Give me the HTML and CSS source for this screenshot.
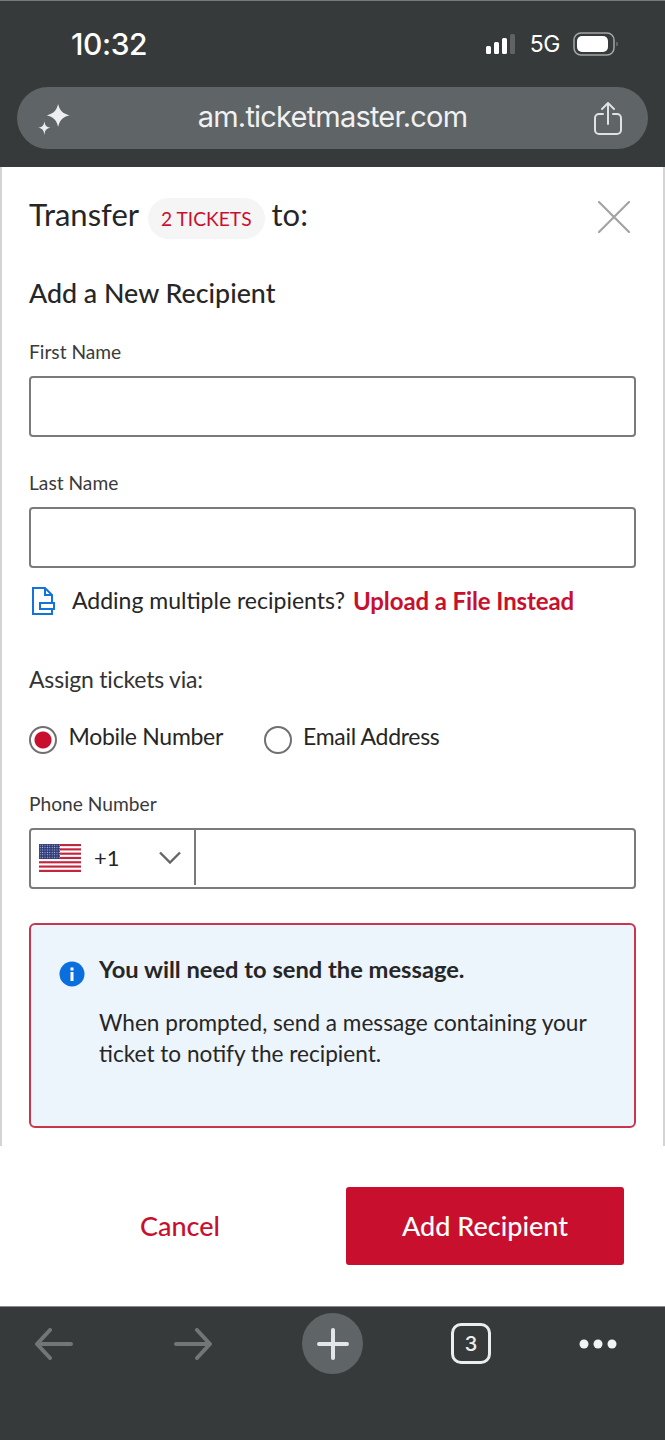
FILE: index.html
```html
<!DOCTYPE html>
<html lang="en">
<head>
<meta charset="utf-8">
<title>Transfer tickets</title>
<link rel="stylesheet" href="styles.css">
</head>
<body>
<header class="chrome-top">
  <div class="status">
    <span class="time">10:32</span>
    <div class="status-right">
      <svg class="signal" width="34" height="22" viewBox="0 0 34 22"><rect x="0" y="13" width="5" height="8" rx="1.5" fill="#fff"/><rect x="8" y="9" width="5" height="12" rx="1.5" fill="#fff"/><rect x="16" y="5" width="5" height="16" rx="1.5" fill="#fff"/><rect x="24" y="1" width="5" height="20" rx="1.5" fill="#5f6364"/></svg>
      <span class="net">5G</span>
      <svg class="battery" width="46" height="24" viewBox="0 0 46 24"><rect x="1" y="1" width="40" height="22" rx="7" fill="none" stroke="#a4a6a7" stroke-width="1.5"/><rect x="4" y="4" width="31" height="16" rx="5" fill="#fff"/><path d="M43.500 9.500c1.500.8 1.500 4.200 0 5z" fill="#8b8d8e"/></svg>
    </div>
  </div>
  <div class="urlbar">
    <svg class="sparkle" width="38" height="38" viewBox="0 0 36 36"><path d="M20 1c1.500 9 3.500 12.500 14 14.500C23.500 17.500 21.500 21 20 30c-1.500-9-3.500-12.500-14-14.500C16.500 13.500 18.500 10 20 1z" fill="#eceef0" stroke="#5f6466" stroke-width="1.500"/><path d="M7 21c.7 4 1.500 5.500 6 6.300-4.500.8-5.300 2.300-6 6.700-.7-4.400-1.500-5.900-6-6.700 4.500-.8 5.300-2.300 6-6.300z" fill="#eceef0"/></svg>
    <span class="url">am.ticketmaster.com</span>
    <svg class="share" width="30" height="36" viewBox="0 0 30 36" fill="none" stroke="#dfe1e2" stroke-width="2" stroke-linecap="round" stroke-linejoin="round"><path d="M10 13H6a4 4 0 0 0-4 4v12a4 4 0 0 0 4 4h18a4 4 0 0 0 4-4V17a4 4 0 0 0-4-4h-4"/><path d="M15 23V2M9 8l6-6 6 6"/></svg>
  </div>
</header>

<main class="sheet">
  <div class="title-row">
    <h1 class="title">Transfer <span class="pill">2 TICKETS</span> to:</h1>
    <svg class="close" width="32" height="32" viewBox="0 0 32 32" stroke="#a3a3a3" stroke-width="2.200" stroke-linecap="round"><path d="M1 1l30 30M31 1L1 31"/></svg>
  </div>
  <h2 class="subtitle">Add a New Recipient</h2>

  <form class="form">
    <div class="field first">
      <label class="label">First Name</label>
      <div class="input"></div>
    </div>
    <div class="field">
      <label class="label">Last Name</label>
      <div class="input"></div>
    </div>

    <p class="upload">
      <svg class="file-icon" width="25" height="30" viewBox="0 0 25 30" fill="none" stroke="#1473d8" stroke-width="2"><path d="M21 17V9l-7-7H2v26h19v-5"/><path d="M14 2v7h7"/><rect x="9" y="17" width="14" height="6"/></svg>
      <span>Adding multiple recipients?</span>
      <a class="link">Upload a File Instead</a>
    </p>

    <p class="assign">Assign tickets via:</p>
    <div class="radios">
      <div class="radio"><span class="dot on"></span><span>Mobile Number</span></div>
      <div class="radio"><span class="dot"></span><span>Email Address</span></div>
    </div>

    <div class="field phone-field">
      <label class="label">Phone Number</label>
      <div class="input phone">
        <div class="country">
          <svg class="flag" width="42" height="28" viewBox="0 0 42 28"><defs><pattern id="stars" width="2.400" height="2.400" patternUnits="userSpaceOnUse"><rect width="2.400" height="2.400" fill="#2c3a78"/><circle cx="1.200" cy="1.200" r=".6" fill="#c6cbe0"/></pattern></defs><rect width="42" height="28" fill="#fff"/><g fill="#c0273f"><rect width="42" height="2.150"/><rect y="4.300" width="42" height="2.150"/><rect y="8.600" width="42" height="2.150"/><rect y="12.900" width="42" height="2.150"/><rect y="17.200" width="42" height="2.150"/><rect y="21.500" width="42" height="2.150"/><rect y="25.800" width="42" height="2.200"/></g><rect width="21" height="15" fill="url(#stars)"/></svg>
          <span class="code">+1</span>
          <svg class="chev" width="22" height="13" viewBox="0 0 22 13" fill="none" stroke="#666" stroke-width="2.400"><path d="M1 1.500l10 10 10-10"/></svg>
        </div>
      </div>
    </div>

    <section class="notice">
      <svg class="info" width="26" height="26" viewBox="0 0 26 26"><circle cx="13" cy="13" r="12.500" fill="#0a6fdc"/><rect x="11.500" y="11" width="3" height="9" fill="#fff"/><rect x="11.500" y="6.500" width="3" height="3" fill="#fff"/></svg>
      <div class="notice-body">
        <p class="notice-title">You will need to send the message.</p>
        <p class="notice-text">When prompted, send a message containing your ticket to notify the recipient.</p>
      </div>
    </section>
  </form>
</main>

<div class="actions">
  <a class="cancel">Cancel</a>
  <a class="primary">Add Recipient</a>
</div>

<nav class="chrome-bottom">
  <svg class="nav-arrow" width="40" height="32" viewBox="0 0 40 32" fill="none" stroke="#737677" stroke-width="4" stroke-linecap="round" stroke-linejoin="round"><path d="M37 16H3M16 2L3 16l13 14"/></svg>
  <svg class="nav-arrow fwd" width="40" height="32" viewBox="0 0 40 32" fill="none" stroke="#737677" stroke-width="4" stroke-linecap="round" stroke-linejoin="round"><path d="M3 16h34M24 2l13 14-13 14"/></svg>
  <div class="plus"><svg width="32" height="32" viewBox="0 0 32 32" stroke="#e4e5e6" stroke-width="4" stroke-linecap="round"><path d="M16 2v28M2 16h28"/></svg></div>
  <div class="tabs">3</div>
  <svg class="more" width="38" height="10" viewBox="0 0 38 10" fill="#f2f3f3"><circle cx="5" cy="5" r="4.500"/><circle cx="19" cy="5" r="4.500"/><circle cx="33" cy="5" r="4.500"/></svg>
</nav>
</body>
</html>
```

FILE: styles.css
```css
* { box-sizing: border-box; }
html, body { margin: 0; padding: 0; }
body {
  width: 665px;
  height: 1440px;
  overflow: hidden;
  display: flex;
  flex-direction: column;
  background: #fff;
  color: #262626;
  font-family: "Lato", "Noto Sans", sans-serif;
}
h1, h2, p { margin: 0; font-weight: 400; }

.chrome-top {
  height: 167px;
  background: #363a3b;
  border-top: 1px solid #77797a;
  color: #fff;
  padding: 0 17px;
}
.status {
  height: 86px;
  display: flex;
  justify-content: space-between;
  align-items: center;
  padding: 0 29px 0 54px;
}
.time { font: 500 30px "Inter", sans-serif; letter-spacing: -.4px; margin-top: -1px; }
.status-right { display: flex; align-items: center; margin-top: -1px; }
.signal { margin-right: 10px; }
.net { font: 400 23px "Inter", sans-serif; margin-right: 13px; letter-spacing: -.5px; }
.urlbar {
  height: 62px;
  border-radius: 31px;
  background: #5f6466;
  display: flex;
  align-items: center;
  justify-content: space-between;
  padding: 0 25px 0 20px;
}
.url { font: 400 29px "Inter", "Roboto", sans-serif; letter-spacing: -.8px; color: #f0f1f2; margin: -4px 3px 0 0; }
.sparkle { flex: none; margin-top: -1px; }
.share { flex: none; margin-top: 1px; }

.sheet {
  height: 979px;
  border-left: 2px solid #d4d4d4;
  border-right: 2px solid #d4d4d4;
  padding: 0 27px;
  overflow: hidden;
}
.title-row {
  height: 100px;
  display: flex;
  align-items: flex-start;
  justify-content: space-between;
  padding-right: 6px;
}
.title { font-size: 31px; line-height: 40px; display: flex; align-items: flex-start; margin-top: 27px; }
.pill {
  height: 41px;
  padding: 0 13px;
  margin: 4px 7px 0 9px;
  border-radius: 21px;
  background: #f5f5f5;
  color: #c8102e;
  font-size: 19.2px;
  line-height: 41px;
}
.close { flex: none; margin-top: 34px; }
.subtitle { font-size: 26.800px; line-height: 34px; margin-top: 9px; font-weight: 500; }

.field { margin-top: 32px; }
.field.first { margin-top: 28px; }
.label { display: block; font-size: 19.200px; line-height: 28px; color: #3a3a3a; margin-bottom: 10px; }
.input {
  height: 61px;
  border: 2px solid #7b7b7b;
  border-radius: 4px;
  background: #fff;
}
.upload {
  display: flex;
  align-items: center;
  margin-top: 16px;
  height: 32px;
  font-size: 23px;
}
.file-icon { flex: none; margin: 2px 16px 0 2px; }
.link { color: #c8102e; font-weight: 700; font-size: 24px; letter-spacing: -.1px; margin-left: 8px; }
.assign { font-size: 23px; letter-spacing: -.2px; line-height: 32px; margin-top: 47px; color: #333; }
.radios { display: flex; gap: 40.500px; margin-top: 22px; font-size: 23px; letter-spacing: -.3px; line-height: 32px; }
.radio { display: flex; align-items: center; gap: 11.500px; }
.dot {
  width: 28px;
  height: 28px;
  border-radius: 50%;
  border: 2px solid #707070;
  background: #fff;
  margin-top: 9px;
}
.dot.on { background: radial-gradient(circle, #c8102e 0 8px, #fff 9px); }
.phone-field { margin-top: 36px; }
.phone { display: flex; }
.country {
  width: 165px;
  border-right: 2px solid #7b7b7b;
  display: flex;
  align-items: center;
  padding-left: 8px;
  margin-bottom: 2px;
}
.flag { flex: none; }
.code { font-size: 22px; margin-left: 13px; flex: 1; }
.chev { flex: none; margin-right: 13px; }

.notice {
  margin-top: 34px;
  height: 205px;
  border: 2px solid #c8354f;
  border-radius: 6px;
  background: #ecf4fc;
  display: flex;
  padding: 28px 28px 0 28px;
  gap: 14px;
}
.info { flex: none; margin-top: 8px; }
.notice-title { font-size: 23.700px; line-height: 32px; font-weight: 700; }
.notice-text { font-size: 22.600px; line-height: 31px; margin-top: 22px; }

.actions {
  height: 160px;
  padding: 41px 41px 0 0;
  display: flex;
  align-items: flex-start;
}
.cancel {
  width: 346px;
  height: 78px;
  line-height: 78px;
  text-align: center;
  padding-left: 14px;
  color: #c8102e;
  font-size: 27px;
  font-weight: 500;
}
.primary {
  width: 278px;
  height: 78px;
  line-height: 78px;
  text-align: center;
  background: #c8102e;
  color: #fff;
  border-radius: 3px;
  font-size: 27px;
  font-weight: 500;
}

.chrome-bottom {
  height: 134px;
  background: #363a3b;
  border-top: 1px solid #8a8c8d;
  padding: 6px 0 0 34px;
  display: flex;
  gap: 89px;
  align-items: flex-start;
}
.nav-arrow { margin-top: 15px; flex: none; }
.fwd { margin-left: 10px; }
.more { margin-top: 26px; margin-left: -1px; flex: none; }
.plus {
  width: 61px;
  height: 61px;
  border-radius: 50%;
  background: #5f6466;
  display: flex;
  align-items: center;
  justify-content: center;
}
.tabs {
  width: 40px;
  height: 41px;
  margin: 10px 0 0 -1px;
  border: 3px solid #eceded;
  border-radius: 10px;
  color: #eceded;
  font: 500 20px/36px "Inter", sans-serif;
  text-align: center;
}
```
